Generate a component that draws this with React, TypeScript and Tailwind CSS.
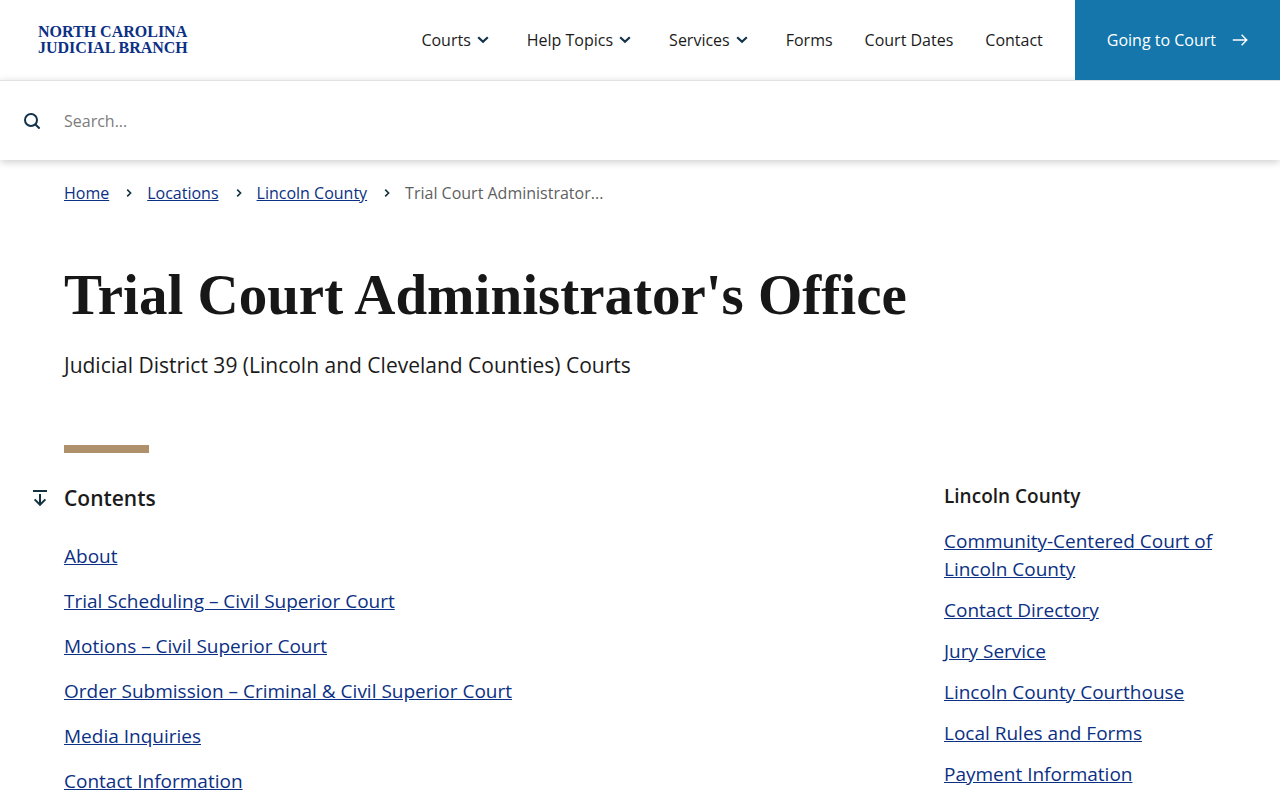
import { useState } from 'react';

interface NavItem {
  label: string;
  hasMenu?: boolean;
}

const navItems: NavItem[] = [
  { label: 'Courts', hasMenu: true },
  { label: 'Help Topics', hasMenu: true },
  { label: 'Services', hasMenu: true },
  { label: 'Forms' },
  { label: 'Court Dates' },
  { label: 'Contact' }
];

const breadcrumbs = ['Home', 'Locations', 'Lincoln County'];

const contents = [
  'About',
  'Trial Scheduling – Civil Superior Court',
  'Motions – Civil Superior Court',
  'Order Submission – Criminal & Civil Superior Court',
  'Media Inquiries',
  'Contact Information'
];

const countyLinks = [
  'Community-Centered Court of Lincoln County',
  'Contact Directory',
  'Jury Service',
  'Lincoln County Courthouse',
  'Local Rules and Forms',
  'Payment Information'
];

function ChevronDown() {
  return (
    <svg className="w-3 h-2" viewBox="0 0 12 8" fill="none" stroke="#12324a" strokeWidth="2.2" aria-hidden="true">
      <path d="M1.2 1.2 6 5.8l4.8-4.6" />
    </svg>
  );
}

function ChevronRight() {
  return (
    <svg className="w-2 h-2" viewBox="0 0 8 8" fill="none" stroke="#12323f" strokeWidth="1.6" aria-hidden="true">
      <path d="M2.2.6 5.6 4 2.2 7.4" />
    </svg>
  );
}

function Header() {
  return (
    <header className="flex items-center justify-between h-20 pl-[38px] bg-white">
      <a href="#" className="font-['Liberation_Serif',serif] font-bold text-base leading-4 text-[#0b3084]">
        NORTH CAROLINA
        <br />
        JUDICIAL BRANCH
      </a>
      <div className="flex items-center self-stretch gap-8">
        <nav className="flex items-center gap-8">
          {navItems.map((item) =>
            item.hasMenu ? (
              <button key={item.label} type="button" className="flex items-center gap-1.5 pr-1.5">
                {item.label}
                <ChevronDown />
              </button>
            ) : (
              <a key={item.label} href="#">
                {item.label}
              </a>
            )
          )}
        </nav>
        <a href="#" className="flex items-center self-stretch gap-4 px-8 bg-[#1476aa] text-white font-medium">
          Going to Court
          <svg className="w-4 h-4" viewBox="0 0 16 16" fill="none" stroke="currentColor" strokeWidth="1.4" aria-hidden="true">
            <path d="M.8 8h14M9.6 2.8 14.8 8l-5.2 5.2" />
          </svg>
        </a>
      </div>
    </header>
  );
}

function SearchBar() {
  const [query, setQuery] = useState('');

  return (
    <form
      role="search"
      onSubmit={(e) => e.preventDefault()}
      className="flex items-center h-20 border-t border-[#e2e2e2] shadow-[0_2px_8px_rgba(0,0,0,0.2)]"
    >
      <button type="submit" aria-label="Search" className="flex justify-center w-16">
        <svg className="w-4 h-4" viewBox="0 0 16 16" fill="none" stroke="#12324a" strokeWidth="2" aria-hidden="true">
          <circle cx="7" cy="7" r="6" />
          <path d="m11.2 11.2 4.4 4.4" />
        </svg>
      </button>
      <input
        type="text"
        aria-label="Search"
        placeholder="Search..."
        value={query}
        onChange={(e) => setQuery(e.target.value)}
        className="flex-1 h-full outline-none placeholder:text-[#7c7c7c]"
      />
    </form>
  );
}

export default function App() {
  return (
    <div className="min-h-screen bg-white font-['Open_Sans',sans-serif] text-base text-[#1b1b1b]">
      <Header />
      <SearchBar />

      <main className="px-16">
        <nav aria-label="Breadcrumb" className="pt-[21px]">
          <ol className="flex items-center">
            {breadcrumbs.map((crumb) => (
              <li key={crumb} className="flex items-center">
                <a href="#" className="text-[#0b3084] underline">
                  {crumb}
                </a>
                <span className="pl-4 pr-3.5">
                  <ChevronRight />
                </span>
              </li>
            ))}
            <li className="text-[#5f5f5f]">Trial Court Administrator...</li>
          </ol>
        </nav>

        <h1 className="mt-14 font-['Liberation_Serif',serif] font-bold text-[57px] leading-[68px] text-[#171717]">
          Trial Court Administrator's Office
        </h1>
        <p className="mt-5 text-[21px] leading-8">Judicial District 39 (Lincoln and Cleveland Counties) Courts</p>
        <div className="mt-16 w-[85px] h-2 bg-[#ae916a]" />

        <div className="flex justify-between pt-[29px] pb-10">
          <section>
            <h2 className="-ml-8 flex items-center gap-4 text-[21px] leading-8 font-semibold">
              <svg className="w-4 h-4" viewBox="0 0 16 16" fill="none" stroke="#12323f" strokeWidth="2" aria-hidden="true">
                <path d="M1 1h14M8 4v11M2.6 9.4 8 14.8l5.4-5.4" />
              </svg>
              Contents
            </h2>
            <ul className="mt-7 flex flex-col gap-4 text-[19px] leading-[29px]">
              {contents.map((item) => (
                <li key={item}>
                  <a href="#" className="text-[#0b3084] underline">
                    {item}
                  </a>
                </li>
              ))}
            </ul>
          </section>

          <aside className="w-[272px]">
            <h2 className="text-[19px] leading-7 font-semibold">Lincoln County</h2>
            <ul className="mt-[17px] flex flex-col gap-[13px] text-[19px] leading-7">
              {countyLinks.map((item) => (
                <li key={item}>
                  <a href="#" className="text-[#0b3084] underline">
                    {item}
                  </a>
                </li>
              ))}
            </ul>
          </aside>
        </div>
      </main>
    </div>
  );
}
